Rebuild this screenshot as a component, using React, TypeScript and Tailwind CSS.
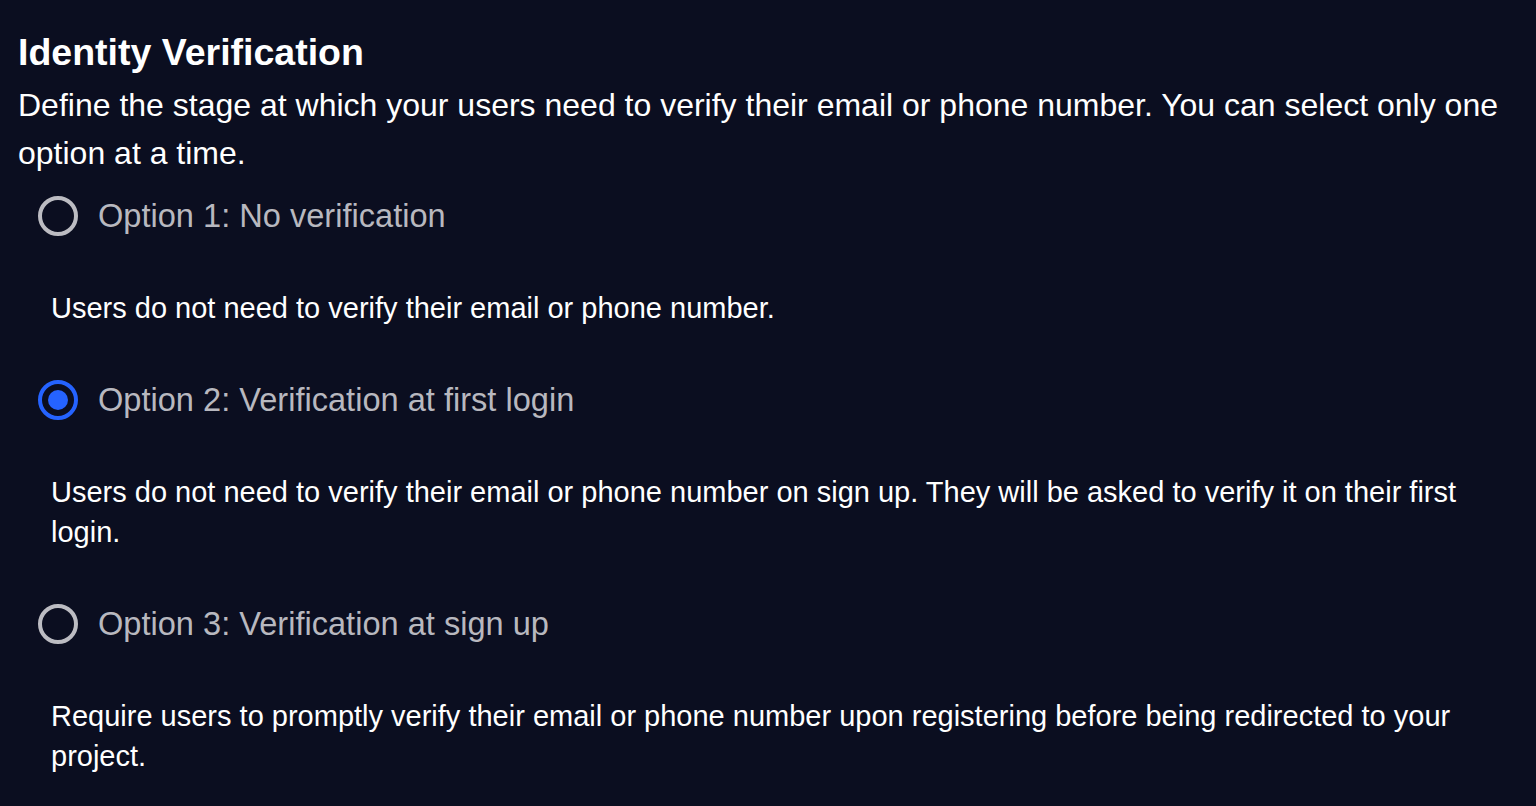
import { useState } from 'react'

const OPTIONS = [
  {
    id: 'none',
    label: 'Option 1: No verification',
    description: 'Users do not need to verify their email or phone number.'
  },
  {
    id: 'first-login',
    label: 'Option 2: Verification at first login',
    description:
      'Users do not need to verify their email or phone number on sign up. They will be asked to verify it on their first login.'
  },
  {
    id: 'sign-up',
    label: 'Option 3: Verification at sign up',
    description:
      'Require users to promptly verify their email or phone number upon registering before being redirected to your project.'
  }
]

function Radio({ checked }: { checked: boolean }) {
  if (checked) {
    return (
      <span className="w-10 h-10 rounded-full border-4 border-[#2563ff] flex items-center justify-center flex-shrink-0">
        <span className="w-5 h-5 rounded-full bg-[#2563ff]" />
      </span>
    )
  }
  return <span className="w-10 h-10 rounded-full border-4 border-[#bcbcc2] flex-shrink-0" />
}

export default function App() {
  const [selected, setSelected] = useState('first-login')

  return (
    <div
      className="min-h-screen bg-[#0b0e20] text-white px-[18px] pt-[30px] pb-10"
      style={{ fontFamily: '"Liberation Sans", Arial, sans-serif' }}
    >
      {/* Header */}
      <h2 className="text-[37.5px] leading-[44px] font-bold">Identity Verification</h2>
      <p className="mt-[7px] text-[32px] leading-[48px] max-w-[1500px]">
        Define the stage at which your users need to verify their email or phone number. You can
        select only one option at a time.
      </p>

      {/* Options */}
      <div className="mt-[19px] flex flex-col">
        {OPTIONS.map((opt, index) => (
          <div key={opt.id} className={index === 0 ? '' : 'mt-[52px]'}>
            <label
              className="flex items-center gap-5 ml-5 cursor-pointer h-10"
              onClick={() => setSelected(opt.id)}
            >
              <Radio checked={selected === opt.id} />
              <span className="text-[32.6px] leading-10 text-[#b8b8bf]">{opt.label}</span>
            </label>
            <p className="mt-[52px] ml-[33px] pr-[18px] text-[29px] leading-10 text-white">
              {opt.description}
            </p>
          </div>
        ))}
      </div>
    </div>
  )
}
